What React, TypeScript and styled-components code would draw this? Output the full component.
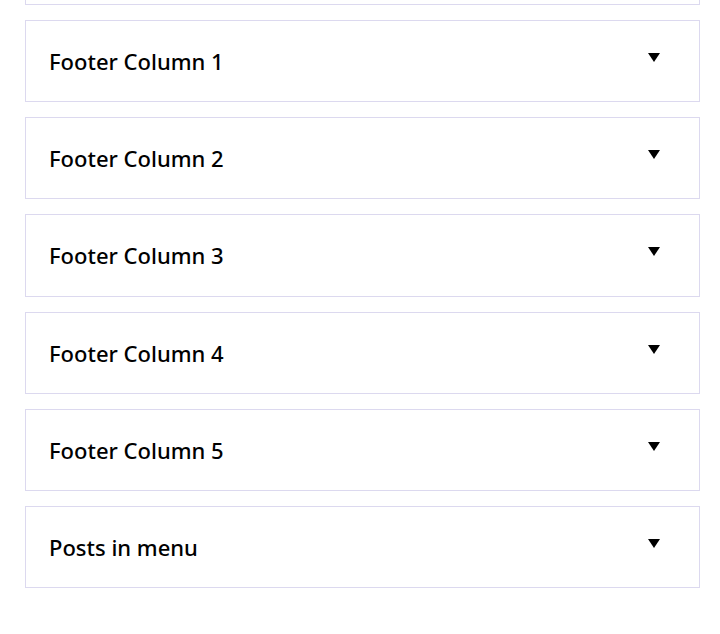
import styled, { createGlobalStyle } from 'styled-components';

const GlobalStyle = createGlobalStyle`
  html, body {
    margin: 0;
    padding: 0;
    background: #ffffff;
  }

  body {
    font-family: 'Noto Sans', 'Open Sans', sans-serif;
    color: #000000;
  }
`;

const Panel = styled.div`
  margin-top: -77.2px;
  padding: 0 20px 0 25px;

  display: flex;
  flex-direction: column;
  gap: 15px;
`;

const Section = styled.div`
  height: 80.2px;
  padding: 0 39px 0 23px;

  display: flex;
  align-items: center;
  justify-content: space-between;

  border: 1px solid #dcd9ef;
  background: #ffffff;
`;

const Title = styled.span`
  font-size: 22px;
  font-weight: 500;
`;

const Caret = styled.span`
  width: 0;
  height: 0;
  margin-bottom: 7px;

  border-left: 6px solid transparent;
  border-right: 6px solid transparent;
  border-top: 9px solid #000000;
`;

const sections = [
  'Footer Menu',
  'Footer Column 1',
  'Footer Column 2',
  'Footer Column 3',
  'Footer Column 4',
  'Footer Column 5',
  'Posts in menu',
];

export default function App() {
  return (
    <>
      <GlobalStyle />
      <Panel>
        {sections.map((title) => (
          <Section key={title}>
            <Title>{title}</Title>
            <Caret />
          </Section>
        ))}
      </Panel>
    </>
  );
}
